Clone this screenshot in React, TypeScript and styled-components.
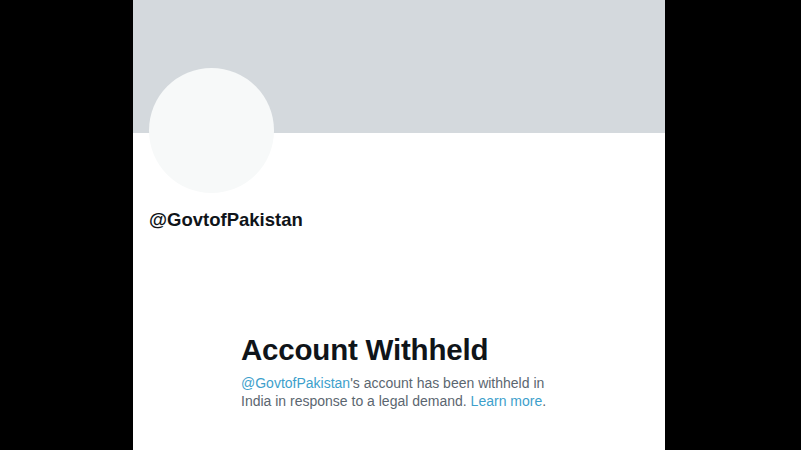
import React from "react";
import styled, { createGlobalStyle } from "styled-components";

const GlobalStyle = createGlobalStyle`
  html, body {
    margin: 0;
    padding: 0;
    background: #000;
    font-family: "Liberation Sans", Arial, sans-serif;
  }
`;

const Stage = styled.div`
  display: flex;
  justify-content: flex-start;
  height: 450px;
  overflow: hidden;
  padding-left: 133px;
`;

const Panel = styled.div`
  width: 532px;
  height: 450px;
  background: #fff;
  display: flex;
  flex-direction: column;
`;

const Banner = styled.div`
  height: 133px;
  background: #d4d9dd;
  flex-shrink: 0;
`;

const ProfileHead = styled.div`
  padding: 0 16px;
  display: flex;
  flex-direction: column;
  align-items: flex-start;
`;

const Avatar = styled.div`
  width: 125px;
  height: 125px;
  margin-top: -65px;
  border-radius: 50%;
  background: #f7f9f9;
`;

const Handle = styled.div`
  margin-top: 16px;
  font-size: 18.5px;
  line-height: 22px;
  font-weight: 700;
  color: #0f1419;
`;

const Notice = styled.div`
  margin-top: 102px;
  padding-left: 108px;
  width: 320px;
`;

const Title = styled.h2`
  margin: 0;
  font-size: 29.5px;
  line-height: 34px;
  font-weight: 700;
  color: #0f1419;
  letter-spacing: -0.2px;
`;

const Body = styled.p`
  margin: 7px 0 0;
  font-size: 14px;
  line-height: 18px;
  color: #5b6670;
`;

const Link = styled.span`
  color: #3d9fcc;
`;

export default function App() {
  return (
    <>
      <GlobalStyle />
      <Stage>
        <Panel>
          <Banner />
          <ProfileHead>
            <Avatar />
            <Handle>@GovtofPakistan</Handle>
          </ProfileHead>
          <Notice>
            <Title>Account Withheld</Title>
            <Body>
              <Link>@GovtofPakistan</Link>'s account has been withheld in India
              in response to a legal demand. <Link>Learn more</Link>.
            </Body>
          </Notice>
        </Panel>
      </Stage>
    </>
  );
}
